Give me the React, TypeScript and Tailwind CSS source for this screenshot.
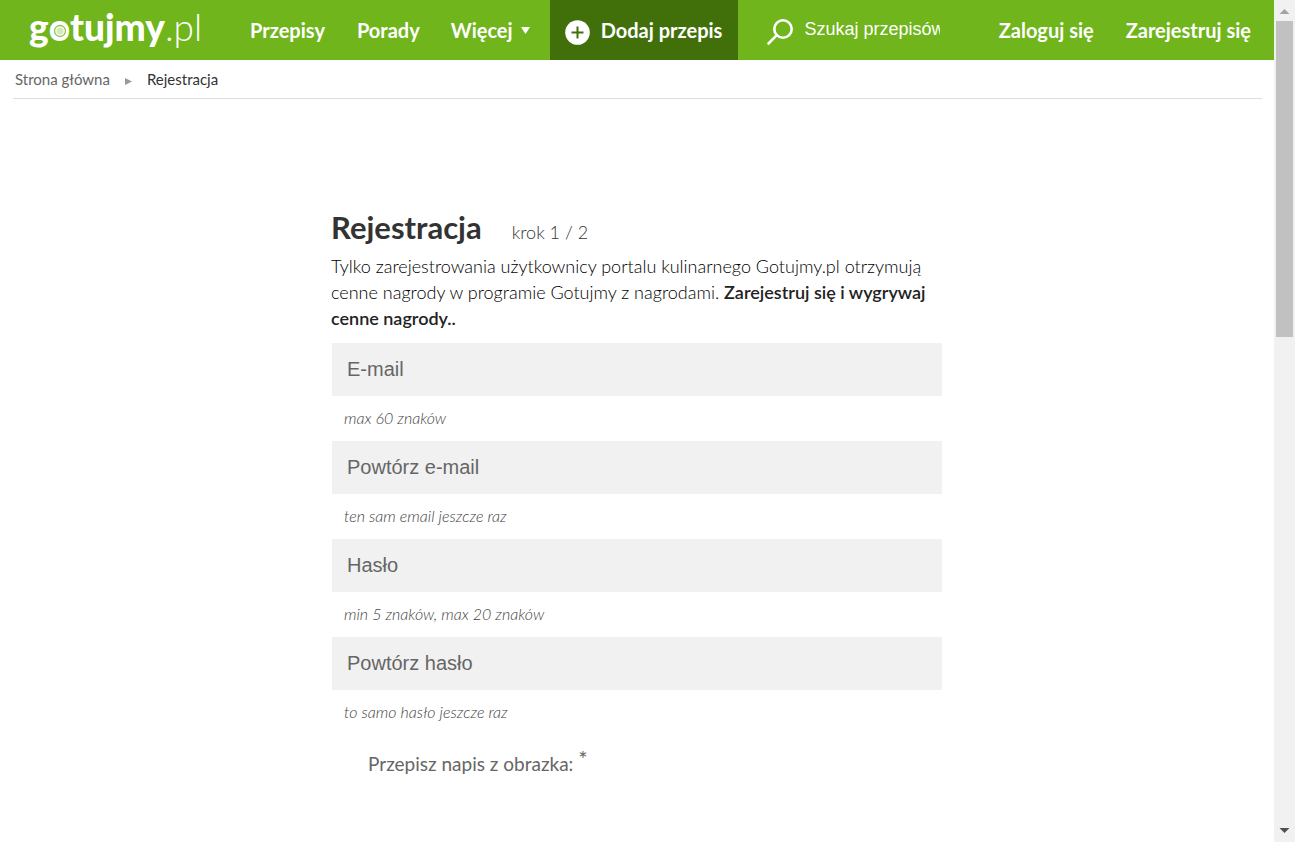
import React from 'react';

const navLink = 'flex h-full items-center px-4 hover:bg-[#41700b]';

const fields = [
  { id: 'email', type: 'email', label: 'E-mail', hint: 'max 60 znaków' },
  { id: 'email2', type: 'email', label: 'Powtórz e-mail', hint: 'ten sam email jeszcze raz' },
  { id: 'password', type: 'password', label: 'Hasło', hint: 'min 5 znaków, max 20 znaków' },
  { id: 'password2', type: 'password', label: 'Powtórz hasło', hint: 'to samo hasło jeszcze raz' },
];

function Logo() {
  return (
    <a href="#" aria-label="gotujmy.pl" className="mb-1.5 ml-[29px] flex w-[205px] items-baseline text-[37px] leading-[52px] text-white">
      <span className="font-black">g</span>
      <span className="relative font-black">
        o
        <svg viewBox="0 0 16 16" className="absolute top-[22px] left-[3px] size-4" aria-hidden="true">
          <circle cx="8" cy="8" r="7.500" fill="#fff" />
          <circle cx="8" cy="8" r="5.500" fill="#fff" stroke="#8fc54c" strokeWidth="1.300" />
          <circle cx="8" cy="8" r="3.600" fill="#d3eab8" />
        </svg>
      </span>
      <span className="font-black">tujmy</span>
      <span className="font-light">.pl</span>
    </a>
  );
}

function Header() {
  return (
    <header className="flex h-[60px] items-center bg-[#6fb51b] text-[20px] font-bold whitespace-nowrap text-white">
      <Logo />
      <nav className="flex h-full items-center">
        <a href="#" className={navLink}>Przepisy</a>
        <a href="#" className={navLink}>Porady</a>
        <button type="button" className="flex h-full items-center gap-2 pr-5 pl-[15px]">
          Więcej
          <svg viewBox="0 0 9 7" className="h-[7px] w-[9px]" aria-hidden="true">
            <path d="M0 0h9L4.500 7z" fill="currentColor" />
          </svg>
        </button>
        <a href="#" className="flex h-full items-center gap-[11px] bg-[#41700b] pr-4 pl-[15px]">
          <svg viewBox="0 0 25 25" className="mt-1 size-[25px]" aria-hidden="true">
            <circle cx="12.500" cy="12.500" r="12.300" fill="#fff" />
            <path d="M12.500 6.500v12M6.500 12.500h12" stroke="#41700b" strokeWidth="2" />
          </svg>
          Dodaj przepis
        </a>
      </nav>
      <form className="ml-7 flex items-center gap-2.5">
        <button type="submit" aria-label="Szukaj">
          <svg viewBox="0 0 28 28" className="mt-1 size-7" fill="none" stroke="#fff" strokeWidth="2.600" aria-hidden="true">
            <circle cx="17" cy="11" r="8.700" />
            <path d="M10.800 17.200 2.500 25.500" strokeLinecap="round" />
          </svg>
        </button>
        <input
          type="text"
          aria-label="Szukaj przepisów"
          placeholder="Szukaj przepisów"
          className="mb-0.5 w-[136px] bg-transparent font-['Liberation_Sans',sans-serif] text-[18px] font-normal outline-none placeholder:text-white"
        />
      </form>
      <div className="mr-[7px] ml-auto flex h-full">
        <a href="#" className={navLink}>Zaloguj się</a>
        <a href="#" className={navLink}>Zarejestruj się</a>
      </div>
    </header>
  );
}

function ScrollRail() {
  return (
    <div aria-hidden="true" className="flex w-[21px] flex-col items-center bg-[#f1f1f1]">
      <svg viewBox="0 0 21 21" className="size-[21px]">
        <path d="M5.500 14h10L10.500 9z" fill="#a3a3a3" />
      </svg>
      <div className="flex w-[17px] flex-1 flex-col">
        <div className="h-[316px] bg-[#c1c1c1]" />
      </div>
      <svg viewBox="0 0 21 21" className="size-[21px]">
        <path d="M5.500 7h10L10.500 12z" fill="#505050" />
      </svg>
    </div>
  );
}

export default function App() {
  return (
    <div className="flex min-h-screen bg-white font-['Lato',sans-serif] text-[#333]">
      <div className="min-w-0 flex-1">
        <Header />
        <nav aria-label="Okruszki" className="mr-3 ml-[13px] flex h-[39px] items-center border-b border-[#ddd] px-0.5 text-[15px]">
          <a href="#" className="text-[#666]">Strona główna</a>
          <svg viewBox="0 0 7 7" className="mt-1 mr-[15px] ml-[15px] size-[7px]" aria-hidden="true">
            <path d="M0 0v7l7-3.500z" fill="#999" />
          </svg>
          <span>Rejestracja</span>
        </nav>
        <main className="mx-auto mt-[106px] w-full max-w-[612px]">
          <div className="flex items-baseline gap-[30px]">
            <h1 className="text-[31px] leading-[44px] font-bold">Rejestracja</h1>
            <span className="text-[18px] font-light text-[#333]">krok 1 / 2</span>
          </div>
          <p className="mt-1 text-[18px] leading-[26px] font-light text-black">
            Tylko zarejestrowania użytkownicy portalu kulinarnego Gotujmy.pl otrzymują cenne nagrody w programie
            Gotujmy z nagrodami. <strong className="font-semibold text-[#222]">Zarejestruj się i wygrywaj cenne nagrody..</strong>
          </p>
          <form className="mt-3 px-px">
            {fields.map((f) => (
              <div key={f.id}>
                <input
                  id={f.id}
                  type={f.type}
                  aria-label={f.label}
                  aria-describedby={f.id + '-hint'}
                  placeholder={f.label}
                  className="block h-[53px] w-full bg-[#f1f1f1] px-[15px] font-['Liberation_Sans',sans-serif] text-[20px] outline-none placeholder:text-[#666]"
                />
                <p id={f.id + '-hint'} className="flex h-[45px] items-center px-3 pb-0.5 text-[16px] font-light text-[#444] italic">{f.hint}</p>
              </div>
            ))}
            <p className="mt-3.5 px-9 text-[19px] leading-[30px] text-[#666]">
              Przepisz napis z obrazka: <sup className="-top-1 text-[22px]">*</sup>
            </p>
          </form>
        </main>
      </div>
      <ScrollRail />
    </div>
  );
}
